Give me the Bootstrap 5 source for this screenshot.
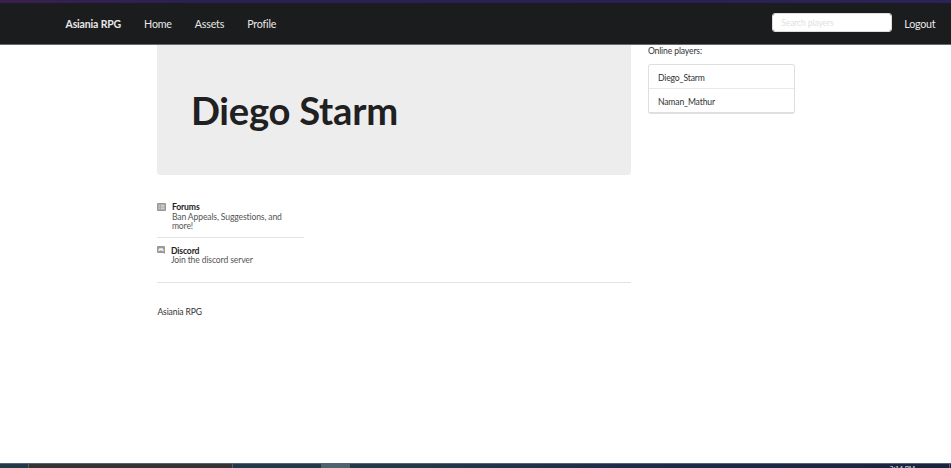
<!DOCTYPE html>
<html lang="en">
<head>
<meta charset="utf-8">
<meta name="viewport" content="width=device-width, initial-scale=1">
<title>Asiania RPG</title>
<link rel="stylesheet" href="https://cdn.jsdelivr.net/npm/bootstrap@5.3.0/dist/css/bootstrap.min.css">
<style>
body{font-family:Lato,"Liberation Sans",sans-serif;font-size:8.6px;letter-spacing:-.13px;line-height:9.5px;color:#333;height:468px;overflow:hidden}
.window-edge{height:3px;background:linear-gradient(90deg,#39204f,#2b2054 20%,#2c2158)}
.site-nav{height:42px;padding:0 15.5px 0 65.5px;background:#1b1c1d;border-bottom:1px solid #6a6a6b;font-size:10.7px;letter-spacing:-.2px;--bs-navbar-padding-y:0}
.site-nav a{color:#e8e8e8;text-decoration:none;line-height:14px}
.site-nav .site-brand{color:#e8e8e8;font-weight:700;font-size:10.5px;letter-spacing:-.15px}
.menu-links{gap:23px}
.site-nav .form-control{width:120px;height:19px;min-height:0;padding:0 8px;font-size:8.6px;letter-spacing:-.13px;border-radius:3px;border:1px solid #ddd;margin-top:-2px}
.site-nav .form-control::placeholder{color:#dfdfdf;opacity:1}
.page{margin-left:157.4px;width:638px;gap:17px}
.main-col{width:473.5px}
.side-col{width:147px;padding-top:2px}
.hero{height:130px;background:#ededed;border-radius:0 0 3px 3px;padding:0 33.5px}
.hero h1{font-size:38.2px;letter-spacing:-.25px;line-height:44px;color:#1f2021;margin:0}
.features{width:147px;margin-top:28px}
.feature{gap:5.5px}
.feature b{display:block;color:#222}
.feature span{color:#555;display:block}
.feature svg{flex:none}
.feature+.feature{border-top:1px solid #e3e3e3;margin-top:5.5px;padding-top:8.5px}
.feature+.feature svg{margin-top:-1px}
.foot{border-top:1px solid #e3e3e3;margin-top:16px;padding-top:25.5px}
.players{margin-top:7.5px;border:1px solid #dedfdf;border-bottom-width:2px;border-radius:3px}
.players .list-group-item{font-size:8.6px;line-height:10px;padding:8px 9px 5px;height:24px;color:#333;border-color:#e8e8e8}
.players .list-group-item:last-child{height:22.5px}
.taskbar{height:5px;border-top:1px solid #586570;background:linear-gradient(90deg,#223a45,#213848 45%,#1d2c49 65%,#19233f);overflow:hidden}
.task-search{margin-left:28px;width:205px;background:#353233;border:solid #5c5a5a;border-width:0 1px}
.task-app{margin-left:88px;width:29px;background:#4d626c}
.clock{margin-right:34px;padding-top:1px;color:#eee;font:7px/8px "Open Sans",sans-serif;letter-spacing:-.1px;white-space:nowrap}
.task-end{width:1px;background:#536078;margin-right:1px}
</style>
<script src="https://cdn.jsdelivr.net/npm/bootstrap@5.3.0/dist/js/bootstrap.bundle.min.js"></script>
</head>
<body class="d-flex flex-column bg-white">
<div class="window-edge flex-shrink-0"></div>
<nav class="site-nav navbar d-flex flex-nowrap justify-content-between flex-shrink-0">
  <div class="menu-links d-flex">
    <a class="site-brand" href="#">Asiania RPG</a><a href="#">Home</a><a href="#">Assets</a><a href="#">Profile</a>
  </div>
  <div class="d-flex align-items-center" style="gap:12px">
    <input class="form-control" type="text" placeholder="Search players" aria-label="Search players">
    <a href="#">Logout</a>
  </div>
</nav>
<div class="page d-flex flex-grow-1">
  <main class="main-col">
    <header class="hero d-flex align-items-center"><h1 class="fw-bold">Diego Starm</h1></header>
    <div class="features">
      <div class="feature d-flex">
        <svg width="9" height="8" viewBox="0 0 9 8"><rect width="9" height="8" rx="1" fill="#999"/><path d="M1.5 2.2h1.3M3.6 2.2h4M1.5 4h1.3M3.6 4h4M1.5 5.8h1.3M3.6 5.8h4" stroke="#eee" stroke-width=".9"/></svg>
        <div><b>Forums</b><span>Ban Appeals, Suggestions, and more!</span></div>
      </div>
      <div class="feature d-flex">
        <svg width="8" height="8" viewBox="0 0 8 8"><path d="M1 0h6a1 1 0 0 1 1 1v7l-1.5-1H1a1 1 0 0 1-1-1V1a1 1 0 0 1 1-1z" fill="#999"/><path d="M1.3 5.3Q1.4 3 2.4 2.3h3.2Q6.6 3 6.7 5.3L5.5 5 5 4.5H3L2.5 5z" fill="#f2f2f2"/></svg>
        <div><b>Discord</b><span>Join the discord server</span></div>
      </div>
    </div>
    <footer class="foot">Asiania RPG</footer>
  </main>
  <aside class="side-col">
    <div>Online players:</div>
    <div class="players list-group list-group-flush">
      <div class="list-group-item">Diego_Starm</div>
      <div class="list-group-item">Naman_Mathur</div>
    </div>
  </aside>
</div>
<div class="taskbar d-flex flex-shrink-0">
  <div class="task-search"></div><div class="task-app"></div>
  <div class="clock ms-auto">3:14 PM</div><div class="task-end"></div>
</div>
</body>
</html>
